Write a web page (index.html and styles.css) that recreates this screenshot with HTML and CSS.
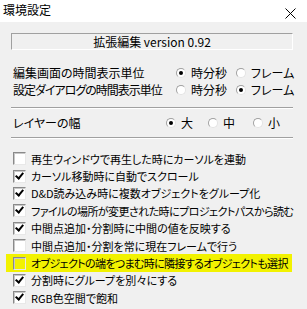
FILE: index.html
```html
<!DOCTYPE html>
<html lang="ja">
<head>
    <meta charset="UTF-8">
    <title>環境設定</title>
    <link rel="stylesheet" href="styles.css">
</head>
<body>
    <div class="window">
        <div class="titlebar">
            <span class="title">環境設定</span>
            <svg class="close" width="11" height="11" viewBox="0 0 11 11">
                <path d="M0.5 0.5 L10.5 10.5 M10.5 0.5 L0.5 10.5" stroke="#000" stroke-width="1" fill="none"/>
            </svg>
        </div>

        <div class="content">
            <div class="version">拡張編集 version 0.92</div>

            <div class="radio-row first">
                <span class="label">編集画面の時間表示単位</span>
                <span class="opt w60"><i class="radio on"></i>時分秒</span>
                <span class="opt"><i class="radio"></i>フレーム</span>
            </div>
            <div class="radio-row">
                <span class="label tight">設定ダイアログの時間表示単位</span>
                <span class="opt w60"><i class="radio"></i>時分秒</span>
                <span class="opt"><i class="radio on"></i>フレーム</span>
            </div>

            <div class="sep"></div>

            <div class="radio-row layer">
                <span class="label narrow">レイヤーの幅</span>
                <span class="opt w42"><i class="radio on"></i>大</span>
                <span class="opt w45"><i class="radio"></i>中</span>
                <span class="opt"><i class="radio"></i>小</span>
            </div>

            <div class="sep"></div>

            <div class="checks">
                <div class="check"><i class="box"></i>再生ウィンドウで再生した時にカーソルを連動</div>
                <div class="check"><i class="box on"></i>カーソル移動時に自動でスクロール</div>
                <div class="check"><i class="box on"></i>D&amp;D読み込み時に複数オブジェクトをグループ化</div>
                <div class="check long"><i class="box on"></i>ファイルの場所が変更された時にプロジェクトパスから読む</div>
                <div class="check"><i class="box on"></i>中間点追加・分割時に中間の値を反映する</div>
                <div class="check"><i class="box"></i>中間点追加・分割を常に現在フレームで行う</div>
                <div class="check long marked"><i class="box"></i>オブジェクトの端をつまむ時に隣接するオブジェクトも選択</div>
                <div class="check"><i class="box on"></i>分割時にグループを別々にする</div>
                <div class="check"><i class="box on"></i>RGB色空間で飽和</div>
            </div>
        </div>
    </div>
</body>
</html>
```

FILE: styles.css
```css
body {
    margin: 0;
    font-family: "Noto Sans CJK JP", "Noto Sans", sans-serif;
    font-size: 12px;
    color: #000;
    background: #f0f0f0;
    font-feature-settings: "palt";
}

.window {
    width: 307px;
    height: 309px;
    overflow: hidden;
}

.titlebar {
    height: 22px;
    background: #ffffff;
    display: flex;
    align-items: center;
    justify-content: space-between;
    padding: 0 11px 0 3px;
}

.title {
    font-size: 12px;
    line-height: 14px;
    margin-top: -2px;
}

.close {
    margin-top: 4px;
}

.content {
    padding: 11px 14px 0 13px;
}

.version {
    margin-left: -2px;
    height: 15px;
    line-height: 15px;
    text-align: center;
    border-top: 1px solid #a0a0a0;
    border-left: 1px solid #a0a0a0;
    border-bottom: 1px solid #ffffff;
    border-right: 1px solid #ffffff;
}

.radio-row {
    display: flex;
    align-items: center;
    height: 17px;
}

.radio-row.first {
    margin-top: 14px;
}

.radio-row.layer {
    margin: 5px 0 6px;
}

.label {
    width: 163px;
    flex: none;
    white-space: nowrap;
}

.label.tight {
    letter-spacing: -1px;
}

.label.narrow {
    width: 153px;
}

.opt {
    display: flex;
    align-items: center;
    flex: none;
}

.w60 { width: 60px; }
.w42 { width: 42px; }
.w45 { width: 45px; }

.radio {
    width: 10px;
    height: 10px;
    border-radius: 50%;
    background: #ffffff;
    border: 1px solid;
    border-color: #a0a0a0 #e3e3e3 #e3e3e3 #a0a0a0;
    box-sizing: border-box;
    margin-right: 5px;
    position: relative;
}

.radio.on::after {
    content: "";
    position: absolute;
    left: 2px;
    top: 2px;
    width: 4px;
    height: 4px;
    border-radius: 50%;
    background: #000;
}

.sep {
    margin: 9px 0 0 -2px;
    border-top: 1px solid #a0a0a0;
    border-bottom: 1px solid #ffffff;
    height: 0;
}

.radio-row.layer + .sep {
    margin-top: 0;
}

.checks {
    margin-top: 11px;
}

.check {
    display: flex;
    align-items: center;
    height: 17.4px;
    white-space: nowrap;
    font-size: 11px;
}

.check.long {
    letter-spacing: -0.55px;
}

.box {
    width: 13px;
    height: 13px;
    box-sizing: border-box;
    background: #ffffff;
    border: 1px solid;
    border-color: #8a8a8a #e8e8e8 #e8e8e8 #8a8a8a;
    box-shadow: inset 1px 1px 0 #c8c8c8;
    margin-right: 5px;
    flex: none;
    position: relative;
}

.box.on::after {
    content: "";
    position: absolute;
    left: 3px;
    top: 0px;
    width: 3px;
    height: 6px;
    border-right: 2px solid #000;
    border-bottom: 2px solid #000;
    transform: rotate(40deg);
}

.check.marked {
    background: #f2f200;
    margin-left: -7px;
    padding-left: 7px;
    margin-right: 1px;
    letter-spacing: -0.65px;
}

.check.marked .box {
    background: transparent;
}
```
